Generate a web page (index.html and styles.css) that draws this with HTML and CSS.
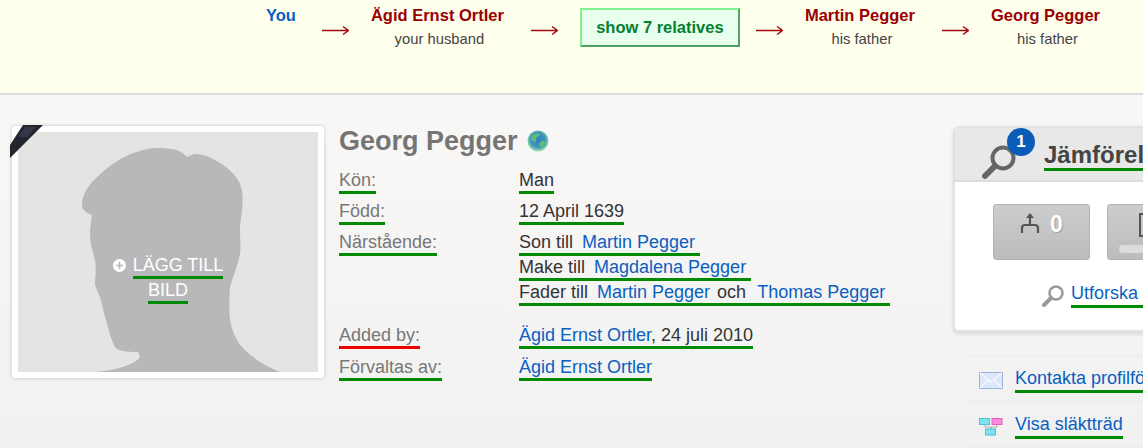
FILE: index.html
```html
<!DOCTYPE html>
<html lang="en">
<head>
    <meta charset="UTF-8">
    <meta name="viewport" content="width=device-width, initial-scale=1.0">
    <title>Georg Pegger</title>
    <link rel="stylesheet" href="styles.css">
</head>
<body>
    <div class="path-bar">
        <div class="path-item path-you"><a class="path-name" href="#">You</a></div>
        <svg class="path-arrow" width="27" height="11" viewBox="0 0 27 11"><path d="M0 5.5H26M21 1.5L26.5 5.5L21 9.5" fill="none" stroke="#a00a0a" stroke-width="1.5"/></svg>
        <div class="path-item">
            <a class="path-name" href="#">Ägid Ernst Ortler</a>
            <span class="path-rel">your husband</span>
        </div>
        <svg class="path-arrow" width="27" height="11" viewBox="0 0 27 11"><path d="M0 5.5H26M21 1.5L26.5 5.5L21 9.5" fill="none" stroke="#a00a0a" stroke-width="1.5"/></svg>
        <a class="show-btn" href="#">show 7 relatives</a>
        <svg class="path-arrow after-btn" width="27" height="11" viewBox="0 0 27 11"><path d="M0 5.5H26M21 1.5L26.5 5.5L21 9.5" fill="none" stroke="#a00a0a" stroke-width="1.5"/></svg>
        <div class="path-item">
            <a class="path-name" href="#">Martin Pegger</a>
            <span class="path-rel">his father</span>
        </div>
        <svg class="path-arrow" width="27" height="11" viewBox="0 0 27 11"><path d="M0 5.5H26M21 1.5L26.5 5.5L21 9.5" fill="none" stroke="#a00a0a" stroke-width="1.5"/></svg>
        <div class="path-item">
            <a class="path-name" href="#">Georg Pegger</a>
            <span class="path-rel">his father</span>
        </div>
    </div>

    <div class="main">
        <div class="photo-card">
            <svg class="ribbon" width="33" height="33" viewBox="0 0 33 33"><polygon points="0,33 0,20 13,0 33,0" fill="#23252d"/><polygon points="8,12 15,2 26,2 17,12" fill="#33374a"/></svg>
            <div class="photo">
                <svg class="silhouette" width="300" height="240" viewBox="0 0 300 240">
                    <path fill="#b7b8ba" d="M77 240C100 238 118 232 122 225L120 220C108 220 100 219 97 215C93 208 90 195 87 185L82 165C79 158 77 155 77 150C78 140 78 135 77 128C74 118 72 110 72 101C72 95 73 90 74 83C68 81 63 77 64 72C64 65 68 56 76 48C88 36 100 27 115 21C125 18 132 16 139 16C150 16 158 17 163 20C166 22 168 24 169 25C172 23 176 22 179 22C188 23 197 27 205 33C214 39 221 47 223 55C225 62 225 68 224 78C223 88 222 93 222 98C222 108 223 115 222 122C220 132 216 142 212 155C211 170 211 180 212 188C214 198 217 207 224 215C234 226 248 234 262 240Z"/>
                </svg>
                <a class="add-photo" href="#">
                    <span class="add-line">
                        <svg class="plus-icon" width="13" height="13" viewBox="0 0 13 13"><circle cx="6.5" cy="6.5" r="6.5" fill="#fff"/><path d="M6.5 3V10M3 6.5H10" stroke="#b7b8ba" stroke-width="1.6"/></svg>
                        <span class="mark">LÄGG TILL</span>
                    </span>
                    <span class="add-line"><span class="mark">BILD</span></span>
                </a>
            </div>
        </div>

        <div class="info">
            <h1 class="name">Georg Pegger
                <svg class="globe" width="22" height="22" viewBox="0 0 22 22">
                    <defs>
                        <radialGradient id="globe-fill" cx="50%" cy="45%" r="55%">
                            <stop offset="0" stop-color="#2f7fc4"/>
                            <stop offset="0.65" stop-color="#3f9ab8"/>
                            <stop offset="1" stop-color="#a4e4a8"/>
                        </radialGradient>
                    </defs>
                    <circle cx="11" cy="11" r="10.5" fill="url(#globe-fill)"/>
                    <path d="M4 8C7 3 11 3 13 4C11 7 9 7 9 10C9 13 6 13 4 8ZM13 12C16 10 18 11 18 13C17 16 14 18 13 17C13 15 12 14 13 12Z" fill="#63bb78"/>
                </svg>
            </h1>
            <div class="fact">
                <div class="fact-label"><span class="mark">Kön:</span></div>
                <div class="fact-value"><span class="mark">Man</span></div>
            </div>
            <div class="fact">
                <div class="fact-label"><span class="mark">Född:</span></div>
                <div class="fact-value"><span class="mark">12 April 1639</span></div>
            </div>
            <div class="fact fact-relatives">
                <div class="fact-label"><span class="mark">Närstående:</span></div>
                <div class="fact-value">
                    <div class="relation"><span class="mark">Son till <a href="#">Martin Pegger</a>&nbsp;</span></div>
                    <div class="relation"><span class="mark">Make till <a href="#">Magdalena Pegger</a>&nbsp;</span></div>
                    <div class="relation"><span class="mark">Fader till <a href="#">Martin Pegger</a> <span class="word-och">och</span> <a href="#">Thomas Pegger</a>&nbsp;</span></div>
                </div>
            </div>
            <div class="fact">
                <div class="fact-label"><span class="mark mark-red">Added by:</span></div>
                <div class="fact-value"><span class="mark"><a href="#">Ägid Ernst Ortler</a>, 24 juli 2010</span></div>
            </div>
            <div class="fact">
                <div class="fact-label"><span class="mark">Förvaltas av:</span></div>
                <div class="fact-value"><span class="mark"><a href="#">Ägid Ernst Ortler</a></span></div>
            </div>
        </div>

        <div class="side">
            <div class="compare-box">
                <div class="compare-head">
                    <div class="compare-icon">
                        <svg width="36" height="36" viewBox="0 0 36 36"><circle cx="21" cy="15" r="10.5" fill="none" stroke="#666" stroke-width="4"/><path d="M13 23L3 33" stroke="#666" stroke-width="6" stroke-linecap="round"/></svg>
                        <span class="badge">1</span>
                    </div>
                    <span class="compare-title mark">Jämförelse</span>
                </div>
                <div class="compare-body">
                    <div class="compare-btns">
                        <div class="tool-btn">
                            <svg width="20" height="20" viewBox="0 0 20 20"><path d="M10 4V12M2 20V15C2 13 3 12 5 12H15C17 12 18 13 18 15V20" fill="none" stroke="#555" stroke-width="2.2"/><path d="M6 5L10 0L14 5Z" fill="#555"/></svg>
                            <span class="tool-count">0</span>
                        </div>
                        <div class="tool-btn tool-btn-list">
                            <svg width="20" height="24" viewBox="0 0 20 24"><path d="M2 1H18V23H2Z" fill="#c8cacc" stroke="#555" stroke-width="2"/><path d="M5 6H15M5 10H15M5 14H15M5 18H15" stroke="#555" stroke-width="2"/></svg>
                            <span class="tool-bar"></span>
                        </div>
                    </div>
                    <div class="explore">
                        <svg width="23" height="23" viewBox="0 0 23 23"><circle cx="14" cy="9" r="6.5" fill="none" stroke="#999" stroke-width="2.5"/><path d="M9 14L2 21" stroke="#999" stroke-width="4" stroke-linecap="round"/></svg>
                        <a class="mark" href="#">Utforska släktträdet</a>
                    </div>
                </div>
            </div>
            <ul class="side-links">
                <li>
                    <svg width="24" height="17" viewBox="0 0 24 17"><rect x="0.5" y="0.5" width="23" height="16" fill="#dce7fa" stroke="#9db2dc"/><path d="M1 1L12 10L23 1M1 16L9 8M23 16L15 8" fill="none" stroke="#f4f7ff" stroke-width="1.5"/></svg>
                    <a class="mark" href="#">Kontakta profilförvaltaren</a>
                </li>
                <li>
                    <svg width="24" height="18" viewBox="0 0 24 18"><path d="M6 6V9H18V6M12 9V12" fill="none" stroke="#aaa"/><rect x="0.5" y="0.5" width="10" height="6" fill="#7fe0ee" stroke="#45c4dc"/><rect x="13" y="0.5" width="10" height="6" fill="#f58cdc" stroke="#e85cc4"/><rect x="6.5" y="11" width="10" height="6" fill="#7fe0ee" stroke="#45c4dc"/></svg>
                    <a class="mark" href="#">Visa släktträd</a>
                </li>
            </ul>
        </div>
    </div>
</body>
</html>
```

FILE: styles.css
```css
html, body {
    height: 100%;
    overflow: hidden;
}
body {
    display: flex;
    flex-direction: column;
    font-family: "Liberation Sans", Arial, sans-serif;
    margin: 0;
    padding: 0;
    color: #333;
}
a {
    color: #0a5fc0;
    text-decoration: none;
}
.mark {
    border-bottom: 3px solid #008a00;
    padding-bottom: 1px;
}
.mark-red {
    border-bottom-color: #ee0000;
}

/* relationship path */
.path-bar {
    display: flex;
    flex: none;
    align-items: flex-start;
    height: 93px;
    padding-left: 266px;
    background: #ffffee;
    border-bottom: 2px solid #dcdcdc;
    white-space: nowrap;
}
.path-item {
    display: flex;
    flex-direction: column;
    align-items: center;
    padding-top: 7px;
}
.path-you {
    margin-right: -1px;
}
.path-name {
    color: #990000;
    font-size: 16.5px;
    font-weight: bold;
    line-height: 17px;
}
.path-you .path-name {
    color: #0a5fc0;
}
.path-rel {
    margin-top: 7px;
    padding-left: 4px;
    color: #444;
    font-size: 14.8px;
    line-height: 16px;
}
.path-arrow {
    flex: none;
    margin: 25px 22px 0 27px;
}
.path-arrow.after-btn {
    margin-left: 16px;
}
.show-btn {
    box-sizing: border-box;
    width: 160px;
    height: 39px;
    margin-top: 8px;
    background: #e8ffee;
    border: 2px solid;
    border-color: #80f090 #50a068 #50a068 #80f090;
    color: #058030;
    font-size: 16.5px;
    font-weight: bold;
    line-height: 35px;
    text-align: center;
}

/* main area */
.main {
    display: flex;
    flex: 1;
    align-items: flex-start;
    padding: 31px 0 0 12px;
    background: linear-gradient(#f9f8f6, #f1f1f1);
    font-size: 18px;
}
.photo-card {
    position: relative;
    flex: none;
    padding: 6px;
    background: #fff;
    border-radius: 3px;
    box-shadow: 0 0 4px rgba(0, 0, 0, 0.2);
}
.ribbon {
    position: absolute;
    z-index: 1;
    left: -2px;
    top: -1px;
}
.photo {
    position: relative;
    width: 300px;
    height: 240px;
    background: #e4e4e2;
}
.silhouette {
    display: block;
}
.add-photo {
    position: absolute;
    left: 0;
    right: 0;
    top: 121px;
    color: #fff;
    text-align: center;
    line-height: 25px;
}
.add-line {
    display: block;
}
.plus-icon {
    margin-right: 2px;
    vertical-align: -1px;
}

.info {
    flex: none;
    width: 614px;
    margin-left: 15px;
}
.name {
    display: flex;
    align-items: center;
    gap: 9px;
    height: 30px;
    margin: 0 0 14px;
    color: #757575;
    font-size: 27px;
    font-weight: bold;
}
.fact {
    display: flex;
    margin-bottom: 11px;
    line-height: 20px;
    white-space: nowrap;
}
.fact-relatives {
    margin-bottom: 18px;
}
.fact-relatives + .fact {
    margin-bottom: 12px;
}
.fact-label {
    flex: none;
    width: 180px;
    color: #777;
}
.relation {
    height: 25px;
}
.relation a {
    margin-left: 4px;
}
.word-och {
    margin: 0 2px;
}

/* compare box and links */
.side {
    flex: none;
    width: 290px;
}
.compare-box {
    box-sizing: border-box;
    height: 206px;
    background: #fff;
    border: 2px solid #e2e2e2;
    border-radius: 6px;
    box-shadow: 0 2px 4px rgba(0, 0, 0, 0.12);
    white-space: nowrap;
}
.compare-head {
    display: flex;
    align-items: center;
    box-sizing: border-box;
    height: 54px;
    padding: 13px 0 0 27px;
    background: #e8e8e8;
    border-bottom: 2px solid #dddddd;
    border-radius: 4px 4px 0 0;
}
.compare-icon {
    position: relative;
    width: 36px;
    height: 36px;
}
.badge {
    position: absolute;
    left: 25px;
    top: -15px;
    width: 28px;
    height: 28px;
    background: #0a5cb8;
    border-radius: 50%;
    color: #fff;
    font-size: 17px;
    font-weight: bold;
    line-height: 28px;
    text-align: center;
}
.compare-title {
    margin: -7px 0 0 26px;
    color: #444;
    font-size: 24px;
    font-weight: bold;
    line-height: 24px;
}
.compare-body {
    padding: 22px 0 0 38px;
}
.compare-btns {
    display: flex;
    gap: 17px;
}
.tool-btn {
    display: flex;
    justify-content: center;
    gap: 10px;
    box-sizing: border-box;
    width: 97px;
    height: 56px;
    padding-top: 8px;
    background: linear-gradient(#cbcdcf, #bcbcbc);
    border: 1px solid #b2b2b2;
    border-radius: 3px;
}
.tool-count {
    color: #fff;
    font-size: 23px;
    font-weight: bold;
    line-height: 22px;
    text-shadow: 1px 1px 1px rgba(0, 0, 0, 0.2);
}
.tool-btn-list {
    position: relative;
    padding-right: 16px;
}
.tool-bar {
    position: absolute;
    left: 11px;
    right: 11px;
    bottom: 6px;
    height: 8px;
    background: #dcdcdc;
    border-radius: 4px;
}
.explore {
    display: flex;
    align-items: center;
    gap: 6px;
    margin: 23px 0 0 49px;
}
.side-links {
    margin: 23px 0 0 15px;
    padding: 0;
    list-style: none;
    white-space: nowrap;
}
.side-links li {
    display: flex;
    align-items: center;
    gap: 12px;
    box-sizing: border-box;
    height: 47px;
    padding: 4px 0 0 11px;
    border-top: 1px solid #ebebeb;
    border-bottom: 1px solid #ebebeb;
    margin-bottom: -1px;
}
```
